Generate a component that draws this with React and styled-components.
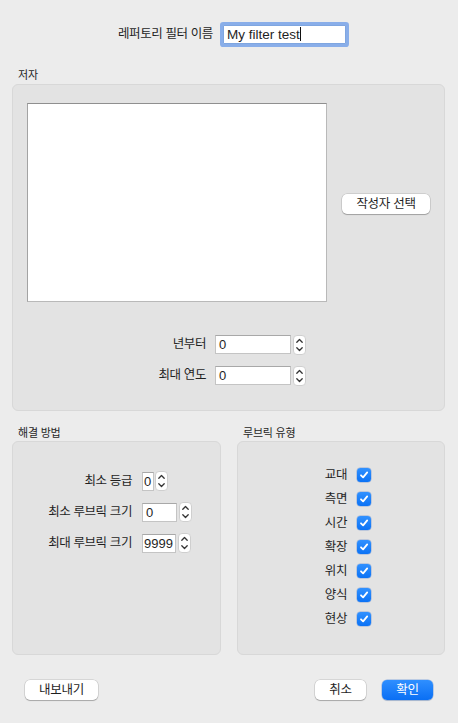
import React from 'react'
import styled, { createGlobalStyle } from 'styled-components'

const GlobalStyle = createGlobalStyle`
  html, body {
    margin: 0;
    padding: 0;
    background: #ececec;
  }

  body {
    font-family: "Liberation Sans", "Noto Sans CJK KR", sans-serif;
    font-size: 13px;
    color: #1f1f1f;
  }

  * { box-sizing: border-box; }
`

const Window = styled.div`
  width: 458px;
  height: 723px;
  padding: 0 13px 0 12px;
  display: flex;
  flex-direction: column;
`

const TitleRow = styled.div`
  display: flex;
  align-items: center;
  gap: 10px;
  padding: 25px 0 0 106px;
`

const Label = styled.span`
  font-size: 12.5px;
  letter-spacing: -0.4px;
  line-height: 19px;
  white-space: nowrap;
  text-align: right;
  width: ${p => (p.$width ? `${p.$width}px` : 'auto')};
  flex-shrink: 0;
`

const TextField = styled.div`
  width: ${p => p.$width}px;
  height: ${p => p.$height || 19}px;
  background: #fff;
  border: 1px solid #c4c4c4;
  border-top-color: #a8a8a8;
  font-size: ${p => (p.$focused ? 13.5 : 13)}px;
  line-height: 17px;
  padding: 0 ${p => (p.$tight ? 1 : 3)}px;
  white-space: nowrap;
  overflow: hidden;
  flex-shrink: 0;
  ${p => p.$focused && `
    border-color: #7fa6e0;
    box-shadow: 0 0 0 3px rgba(104, 154, 232, 0.75);
    border-radius: 1px;
  `}
`

const Caret = styled.span`
  display: inline-block;
  width: 1px;
  height: 14px;
  background: #111;
  vertical-align: -2px;
`

const Section = styled.section`
  display: flex;
  flex-direction: column;
  margin-top: ${p => p.$top || 0}px;
  width: ${p => (p.$width ? `${p.$width}px` : 'auto')};
`

const GroupLabel = styled.div`
  font-size: 11px;
  letter-spacing: -0.2px;
  line-height: 13px;
  padding-left: 6px;
  margin-bottom: ${p => (p.$gap !== undefined ? p.$gap : 2)}px;
  color: #262626;
`

const GroupBox = styled.div`
  height: ${p => p.$height}px;
  background: #e3e3e3;
  border: 1px solid #d8d8d8;
  border-radius: 6px;
  padding: ${p => p.$padding};
  display: flex;
  flex-direction: column;
`

const AuthorTop = styled.div`
  display: flex;
  align-items: center;
  gap: 15px;
`

const ListBox = styled.div`
  width: 300px;
  height: 199px;
  background: #fff;
  border: 1px solid #b9b9b9;
  border-top-color: #8f8f8f;
  border-left-color: #a3a3a3;
`

const PushButton = styled.button`
  height: 20px;
  width: ${p => p.$width}px;
  border-radius: 5px;
  font-family: inherit;
  font-size: 12.5px;
  letter-spacing: -0.3px;
  line-height: 18px;
  padding: 0;
  border: none;
  color: ${p => (p.$primary ? '#fff' : '#1f1f1f')};
  background: ${p => (p.$primary ? 'linear-gradient(#2f8fff, #0a6ff4)' : '#fff')};
  box-shadow: ${p => (p.$primary
    ? '0 0 0 0.5px rgba(0, 80, 200, 0.4), 0 1px 1px rgba(0, 0, 0, 0.12)'
    : '0 0 0 0.5px rgba(0, 0, 0, 0.18), 0 1px 1px rgba(0, 0, 0, 0.22)')};
  margin-top: ${p => p.$offset || 0}px;
`

const FieldRows = styled.div`
  display: flex;
  flex-direction: column;
  gap: ${p => p.$gap}px;
  margin-top: ${p => p.$top}px;
`

const FieldRow = styled.div`
  display: flex;
  align-items: center;
  gap: ${p => p.$gap || 9}px;
  height: ${p => p.$height || 19}px;
`

const StepperWrap = styled.svg`
  flex-shrink: 0;
  margin-left: ${p => p.$left || 0}px;
`

const Stepper = ({ left }) => (
  <StepperWrap width='13' height='20' viewBox='0 0 13 20' $left={left}>
    <rect x='0.5' y='0.5' width='12' height='19' rx='3.5' fill='#fff' stroke='#cfcfcf' />
    <path d='M3.8 7.2 L6.5 4.5 L9.2 7.2' fill='none' stroke='#333' strokeWidth='1.3' strokeLinecap='round' strokeLinejoin='round' />
    <path d='M3.8 12.8 L6.5 15.5 L9.2 12.8' fill='none' stroke='#333' strokeWidth='1.3' strokeLinecap='round' strokeLinejoin='round' />
  </StepperWrap>
)

const BottomRow = styled.div`
  display: flex;
  gap: 16px;
  margin-top: 16px;
`

const CheckList = styled.div`
  display: flex;
  flex-direction: column;
  gap: 10px;
  margin-top: 26px;
`

const CheckRow = styled.label`
  display: flex;
  align-items: center;
  gap: 10px;
  height: 14px;
`

const CheckLabel = styled.span`
  width: 109px;
  text-align: right;
  font-size: 12.5px;
  letter-spacing: -0.4px;
  line-height: 14px;
`

const CheckBox = styled.span`
  width: 14px;
  height: 14px;
  border-radius: 3.5px;
  background: linear-gradient(#3191ff, #0b72f5);
  display: flex;
  align-items: center;
  justify-content: center;
  box-shadow: 0 0 0 0.5px rgba(0, 70, 190, 0.35);
`

const Check = () => (
  <CheckBox>
    <svg width='10' height='10' viewBox='0 0 10 10'>
      <path d='M2 5.3 L4.1 7.4 L8.2 2.4' fill='none' stroke='#fff' strokeWidth='1.8' strokeLinecap='round' strokeLinejoin='round' />
    </svg>
  </CheckBox>
)

const ButtonBar = styled.div`
  display: flex;
  align-items: center;
  margin-top: 25px;
  padding: 0 12px 0 13px;
  gap: 16px;
`

const Spacer = styled.div`
  flex: 1;
`

const rubricTypes = ['교대', '측면', '시간', '확장', '위치', '양식', '현상']

const App = () => {
  return (
    <>
      <GlobalStyle />
      <Window>
        <TitleRow>
          <Label>레퍼토리 필터 이름</Label>
          <TextField $width={123} $focused>My filter test<Caret /></TextField>
        </TitleRow>

        <Section $top={25}>
          <GroupLabel>저자</GroupLabel>
          <GroupBox $height={327} $padding='18px 14px 0 14px'>
            <AuthorTop>
              <ListBox />
              <PushButton $width={88} $offset={3}>작성자 선택</PushButton>
            </AuthorTop>
            <FieldRows $gap={12} $top={33}>
              <FieldRow>
                <Label $width={179}>년부터</Label>
                <TextField $width={76}>0</TextField>
                <Stepper left={-7} />
              </FieldRow>
              <FieldRow>
                <Label $width={179}>최대 연도</Label>
                <TextField $width={76}>0</TextField>
                <Stepper left={-7} />
              </FieldRow>
            </FieldRows>
          </GroupBox>
        </Section>

        <BottomRow>
          <Section $width={209}>
            <GroupLabel $gap={1}>해결 방법</GroupLabel>
            <GroupBox $height={214} $padding='29px 0 0 0'>
              <FieldRows $gap={11} $top={0}>
                <FieldRow $gap={10} $height={20}>
                  <Label $width={119}>최소 등급</Label>
                  <TextField $width={12} $tight>0</TextField>
                  <Stepper left={-9} />
                </FieldRow>
                <FieldRow $gap={10} $height={20}>
                  <Label $width={119}>최소 루브릭 크기</Label>
                  <TextField $width={35}>0</TextField>
                  <Stepper left={-8} />
                </FieldRow>
                <FieldRow $gap={10} $height={20}>
                  <Label $width={119}>최대 루브릭 크기</Label>
                  <TextField $width={34} $tight>9999</TextField>
                  <Stepper left={-8} />
                </FieldRow>
              </FieldRows>
            </GroupBox>
          </Section>

          <Section $width={208}>
            <GroupLabel $gap={1}>루브릭 유형</GroupLabel>
            <GroupBox $height={214} $padding='0'>
              <CheckList>
                {rubricTypes.map(type => (
                  <CheckRow key={type}>
                    <CheckLabel>{type}</CheckLabel>
                    <Check />
                  </CheckRow>
                ))}
              </CheckList>
            </GroupBox>
          </Section>
        </BottomRow>

        <ButtonBar>
          <PushButton $width={73}>내보내기</PushButton>
          <Spacer />
          <PushButton $width={51}>취소</PushButton>
          <PushButton $width={51} $primary>확인</PushButton>
        </ButtonBar>
      </Window>
    </>
  )
}

export default App
